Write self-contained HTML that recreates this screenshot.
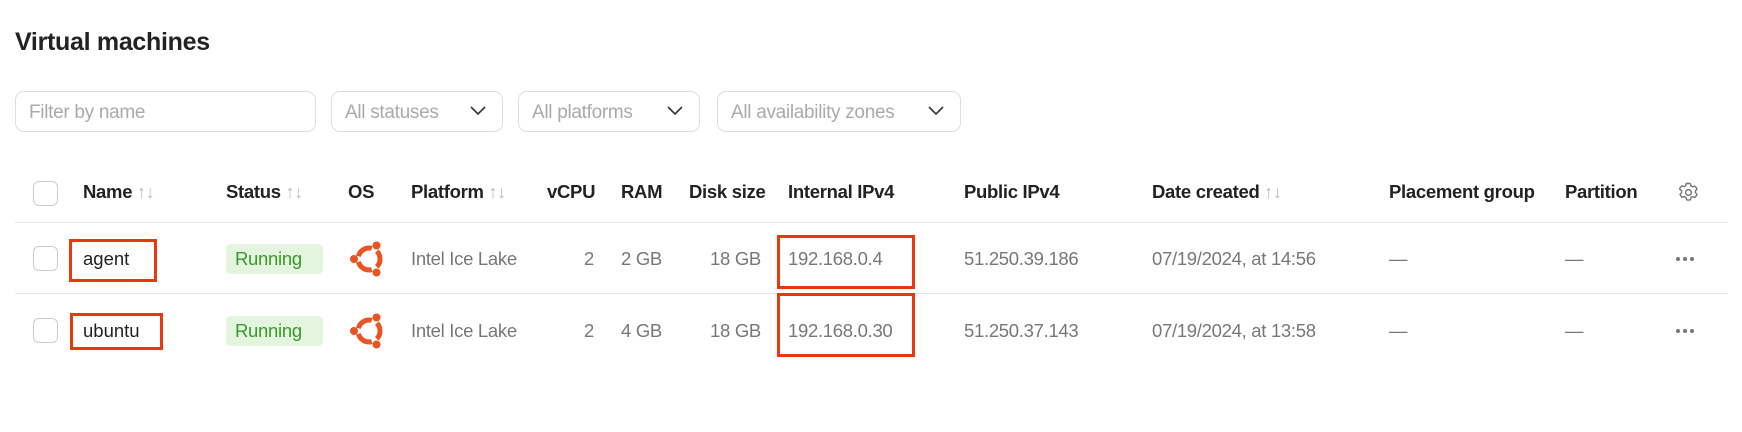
<!DOCTYPE html>
<html><head><meta charset="utf-8"><style>
*{box-sizing:border-box;margin:0;padding:0}
body{width:1742px;height:432px;background:#fff;font-family:"Liberation Sans",sans-serif;color:#222;position:relative;overflow:hidden}
.a{position:absolute;white-space:nowrap}
.t{font-size:25px;font-weight:bold;left:15px;top:28px;letter-spacing:-0.3px}
.in{border:1px solid #ddd;border-radius:9px;height:41px;top:91px;font-size:19px;color:#aaa;padding:10px 13px;letter-spacing:-0.3px}
.chev{position:absolute;right:16px;top:14px}
.h{font-size:18.5px;font-weight:bold;top:181px;letter-spacing:-0.3px}
.s{color:#bbb;font-weight:normal;font-size:18px}
.cb{width:25px;height:25px;border:1px solid #ccc;border-radius:6px;left:33px}
.ln{height:1px;background:#e5e5e5;left:15px;width:1713px}
.c{font-size:18.5px;color:#777;letter-spacing:-0.3px}
.n{font-size:18.5px;color:#222}
.badge{background:#e3f5df;color:#3a9a2a;border-radius:5px;font-size:18.5px;padding:4px 9px;left:226px;width:97px;height:30px;letter-spacing:-0.3px}
.red{border:3px solid #e8380d}
.dot{position:absolute;width:4px;height:4px;border-radius:50%;background:#777}
</style></head><body>
<div class="a t">Virtual machines</div>
<div class="a in" style="left:15px;width:301px">Filter by name</div>
<div class="a in" style="left:331px;width:172px">All statuses<svg class="chev" width="16" height="10"><path d="M1 1l7 7 7-7" fill="none" stroke="#333" stroke-width="1.6"/></svg></div>
<div class="a in" style="left:518px;width:182px">All platforms<svg class="chev" width="16" height="10"><path d="M1 1l7 7 7-7" fill="none" stroke="#333" stroke-width="1.6"/></svg></div>
<div class="a in" style="left:717px;width:244px">All availability zones<svg class="chev" width="16" height="10"><path d="M1 1l7 7 7-7" fill="none" stroke="#333" stroke-width="1.6"/></svg></div>

<div class="a cb" style="top:181px"></div>
<div class="a h" style="left:83px">Name <span class="s">↑↓</span></div>
<div class="a h" style="left:226px">Status <span class="s">↑↓</span></div>
<div class="a h" style="left:348px">OS</div>
<div class="a h" style="left:411px">Platform <span class="s">↑↓</span></div>
<div class="a h" style="left:547px">vCPU</div>
<div class="a h" style="left:621px">RAM</div>
<div class="a h" style="left:689px">Disk size</div>
<div class="a h" style="left:788px">Internal IPv4</div>
<div class="a h" style="left:964px">Public IPv4</div>
<div class="a h" style="left:1152px">Date created <span class="s">↑↓</span></div>
<div class="a h" style="left:1389px">Placement group</div>
<div class="a h" style="left:1565px">Partition</div>
<svg class="a" style="left:1677px;top:181px" width="23" height="23" viewBox="0 0 24 24"><path d="M12 2.5l2 .3.6 2.4 1.6.9 2.3-.8 1.4 1.4 1 1.8-1.7 1.8v1.8l1.7 1.8-1 1.8-1.4 1.4-2.3-.8-1.6.9-.6 2.4-2 .3-2-.3-.6-2.4-1.6-.9-2.3.8-1.4-1.4-1-1.8 1.7-1.8v-1.8L2.7 8.3l1-1.8 1.4-1.4 2.3.8 1.6-.9.6-2.4z" fill="none" stroke="#777" stroke-width="1.5" stroke-linejoin="round"/><circle cx="12" cy="12" r="3" fill="none" stroke="#777" stroke-width="1.5"/></svg>

<div class="a ln" style="top:222px"></div>
<div class="a ln" style="top:293px"></div>

<!-- row 1 -->
<div class="a cb" style="top:246px"></div>
<div class="a n" style="left:83px;top:248px">agent</div>
<div class="a badge" style="top:244px">Running</div>
<svg class="a" style="left:349px;top:241px" width="38" height="36" viewBox="0 0 38 36"><g fill="none" stroke="#e95420" stroke-width="5"><path d="M9.4 15.2A11 11 0 0 1 22.8 7.4"/><path d="M27.8 10.2A11 11 0 0 1 27.8 25.8"/><path d="M22.8 28.6A11 11 0 0 1 9.4 20.8"/></g><g fill="#e95420"><circle cx="5" cy="18" r="4"/><circle cx="27.5" cy="4.5" r="4"/><circle cx="27.5" cy="31.5" r="4"/></g></svg>
<div class="a c" style="left:411px;top:248px">Intel Ice Lake</div>
<div class="a c" style="left:584px;top:248px">2</div>
<div class="a c" style="left:621px;top:248px">2 GB</div>
<div class="a c" style="left:710px;top:248px">18 GB</div>
<div class="a c" style="left:788px;top:248px">192.168.0.4</div>
<div class="a c" style="left:964px;top:248px">51.250.39.186</div>
<div class="a c" style="left:1152px;top:248px">07/19/2024, at 14:56</div>
<div class="a c" style="left:1389px;top:248px">—</div>
<div class="a c" style="left:1565px;top:248px">—</div>
<div class="dot" style="left:1676px;top:257px"></div><div class="dot" style="left:1683px;top:257px"></div><div class="dot" style="left:1690px;top:257px"></div>

<!-- row 2 -->
<div class="a cb" style="top:318px"></div>
<div class="a n" style="left:83px;top:320px">ubuntu</div>
<div class="a badge" style="top:316px">Running</div>
<svg class="a" style="left:349px;top:313px" width="38" height="36" viewBox="0 0 38 36"><g fill="none" stroke="#e95420" stroke-width="5"><path d="M9.4 15.2A11 11 0 0 1 22.8 7.4"/><path d="M27.8 10.2A11 11 0 0 1 27.8 25.8"/><path d="M22.8 28.6A11 11 0 0 1 9.4 20.8"/></g><g fill="#e95420"><circle cx="5" cy="18" r="4"/><circle cx="27.5" cy="4.5" r="4"/><circle cx="27.5" cy="31.5" r="4"/></g></svg>
<div class="a c" style="left:411px;top:320px">Intel Ice Lake</div>
<div class="a c" style="left:584px;top:320px">2</div>
<div class="a c" style="left:621px;top:320px">4 GB</div>
<div class="a c" style="left:710px;top:320px">18 GB</div>
<div class="a c" style="left:788px;top:320px">192.168.0.30</div>
<div class="a c" style="left:964px;top:320px">51.250.37.143</div>
<div class="a c" style="left:1152px;top:320px">07/19/2024, at 13:58</div>
<div class="a c" style="left:1389px;top:320px">—</div>
<div class="a c" style="left:1565px;top:320px">—</div>
<div class="dot" style="left:1676px;top:329px"></div><div class="dot" style="left:1683px;top:329px"></div><div class="dot" style="left:1690px;top:329px"></div>

<!-- red boxes -->
<div class="a red" style="left:69px;top:239px;width:88px;height:43px"></div>
<div class="a red" style="left:70px;top:313px;width:93px;height:37px"></div>
<div class="a red" style="left:777px;top:235px;width:138px;height:54px"></div>
<div class="a red" style="left:777px;top:293px;width:138px;height:64px"></div>
</body></html>
